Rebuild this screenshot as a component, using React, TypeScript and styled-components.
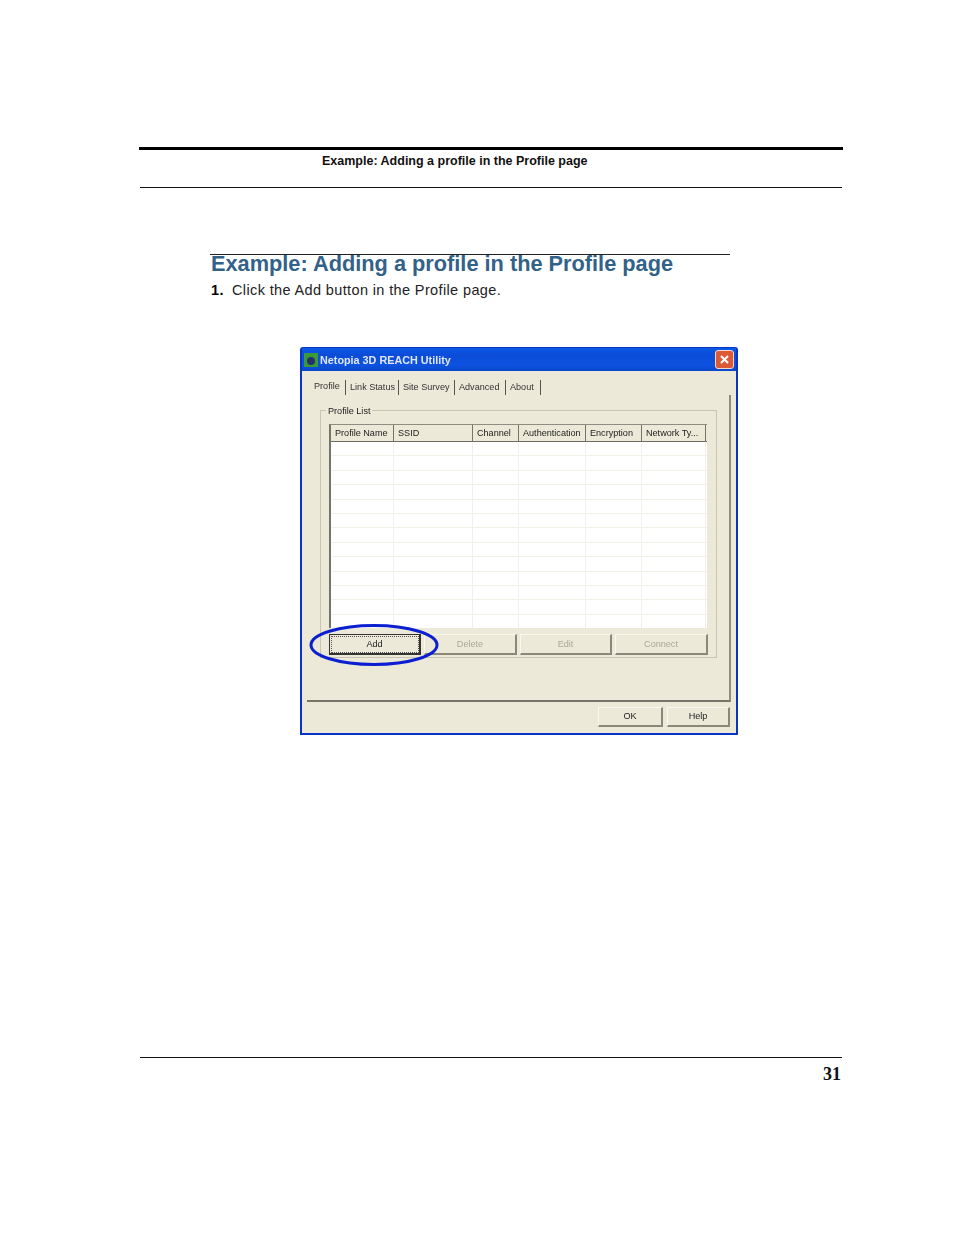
import styled, { createGlobalStyle } from "styled-components";

const GlobalStyle = createGlobalStyle`
  html, body { margin: 0; padding: 0; background: #fff; }
  body { font-family: "Liberation Sans", Arial, sans-serif; color: #111; }
`;

const Page = styled.div`
  width: 954px;
  height: 1235px;
  padding: 147px 111px 0 139px;
  box-sizing: border-box;
  display: flex;
  flex-direction: column;
`;

const TopRule = styled.div`
  height: 3px;
  background: #000;
`;

const RunningHead = styled.div`
  height: 38px;
  box-sizing: border-box;
  margin: 0 1px;
  padding: 4px 0 0 182px;
  font-size: 12.5px;
  line-height: 15px;
  font-weight: 700;
  border-bottom: 1px solid #111;
`;

const Content = styled.div`
  margin: 66px 0 0 71px;
  display: flex;
  flex-direction: column;
`;

const Heading = styled.h1`
  margin: 0;
  width: 520px;
  height: 26px;
  box-sizing: content-box;
  border-top: 1px solid #222;
  font-size: 21.75px;
  line-height: 18px;
  font-weight: 700;
  color: #336289;
  white-space: nowrap;
  text-indent: 1px;
`;

const Step = styled.p`
  margin: 0;
  padding-left: 1px;
  display: flex;
  font-size: 14.5px;
  line-height: 18px;
  color: #222;
  letter-spacing: 0.37px;
`;

const StepNumber = styled.span`
  width: 21px;
  font-weight: 700;
  color: #000;
`;

const Figure = styled.div`
  position: relative;
  margin: 48px 0 0 90px;
  width: 438px;
  filter: blur(0.45px);
`;

const Window = styled.div`
  height: 388px;
  box-sizing: border-box;
  display: flex;
  flex-direction: column;
  background: #ece9d8;
  border: 2px solid #0a35c0;
  border-top: 1px solid #0a35c0;
  border-radius: 3px 3px 0 0;
  font-size: 9.1px;
  color: #222;
`;

const TitleBar = styled.div`
  height: 23px;
  flex: none;
  display: flex;
  align-items: center;
  padding: 0 2px;
  background: linear-gradient(#0a5ae4, #0b4cd8 30%, #0d52e0 75%, #0a46c8);
`;

const TitleText = styled.span`
  margin: 1px 0 0 2px;
  flex: 1;
  font-size: 10.8px;
  font-weight: 700;
  color: #dfe7f6;
`;

const CloseButton = styled.div`
  width: 17px;
  height: 17px;
  border: 1px solid #f0d8d0;
  border-radius: 3px;
  background: #dd5a38;
  display: flex;
  align-items: center;
  justify-content: center;
`;

const Tabs = styled.div`
  height: 23px;
  flex: none;
  display: flex;
  align-items: flex-end;
  padding-left: 12px;
  margin-top: 1px;
`;

const Tab = styled.div<{ $active?: boolean; $width: number }>`
  width: ${(p) => p.$width}px;
  box-sizing: border-box;
  padding-left: ${(p) => (p.$active ? 0 : 4)}px;
  height: 15px;
  line-height: ${(p) => (p.$active ? 13 : 15)}px;
  border-right: 1px solid #555;
  white-space: nowrap;
  color: #333;
`;

const Panel = styled.div`
  height: 307px;
  flex: none;
  box-sizing: border-box;
  margin: 0 5px;
  border-right: 2px solid #8f8d80;
  border-bottom: 2px solid #77756a;
  padding: 15px 12px 0 13px;
`;

const GroupBox = styled.div`
  position: relative;
  height: 248px;
  box-sizing: border-box;
  border: 1px solid #c8c5b4;
  padding: 13px 9px 0 8px;
`;

const GroupTitle = styled.span`
  position: absolute;
  left: 5px;
  top: -6px;
  padding: 0 2px;
  background: #ece9d8;
  line-height: 12px;
`;

const List = styled.div`
  height: 204px;
  box-sizing: border-box;
  background: #fff;
  border-left: 2px solid #77756a;
  border-top: 1px solid #8f8d80;
  display: flex;
  flex-direction: column;
  overflow: hidden;
`;

const cols = "63px 79px 46px 67px 56px 64px";

const ListHeader = styled.div`
  flex: none;
  display: grid;
  grid-template-columns: ${cols};
  height: 16px;
  background: #ece9d8;
  border-bottom: 1px solid #6f6d62;
`;

const HeaderCell = styled.div`
  padding-left: 4px;
  line-height: 17px;
  border-right: 1px solid #77756a;
  white-space: nowrap;
  overflow: hidden;
`;

const Row = styled.div`
  flex: none;
  display: grid;
  grid-template-columns: ${cols};
  height: 14.4px;
  box-sizing: border-box;
  border-bottom: 1px solid #f1efe6;
`;

const Cell = styled.div`
  border-right: 1px solid #f1efe6;
`;

const ButtonRow = styled.div`
  display: grid;
  grid-template-columns: 92px 93px 92px 93px;
  column-gap: 3px;
  margin-top: 6px;
`;

const Button = styled.div<{ $disabled?: boolean; $focused?: boolean }>`
  height: 21px;
  box-sizing: border-box;
  display: flex;
  align-items: center;
  justify-content: center;
  color: ${(p) => (p.$disabled ? "#aaa89a" : "#222")};
  border-right: 2px solid ${(p) => (p.$focused ? "#333" : "#8a887b")};
  border-bottom: 2px solid ${(p) => (p.$focused ? "#333" : "#8a887b")};
  border-top: 1px solid ${(p) => (p.$focused ? "#333" : "#f8f7f0")};
  border-left: 1px solid ${(p) => (p.$focused ? "#333" : "#f8f7f0")};
  outline: ${(p) => (p.$focused ? "1px dotted #555" : "none")};
  outline-offset: -3px;
`;

const Footer = styled.div`
  flex: 1;
  display: flex;
  justify-content: flex-end;
  gap: 4px;
  padding: 5px 6px 0 0;
`;

const FooterButton = styled(Button)<{ $width: number }>`
  width: ${(p) => p.$width}px;
  height: 20px;
  padding-bottom: 1px;
`;

const Oval = styled.svg`
  position: absolute;
  left: 9px;
  top: 276px;
`;

const BottomRule = styled.div`
  margin: auto 1px 0;
  border-top: 1px solid #111;
  padding: 6px 1px 0 0;
  text-align: right;
  font-family: "Liberation Serif", "Times New Roman", serif;
  font-size: 18px;
  line-height: 21px;
  font-weight: 700;
  height: 171px;
`;

const headers = ["Profile Name", "SSID", "Channel", "Authentication", "Encryption", "Network Ty..."];

const tabs = [
  { label: "Link Status", width: 53 },
  { label: "Site Survey", width: 56 },
  { label: "Advanced", width: 51 },
  { label: "About", width: 35 },
];

export default function App() {
  return (
    <>
      <GlobalStyle />
      <Page>
        <TopRule />
        <RunningHead>Example: Adding a profile in the Profile page</RunningHead>
        <Content>
          <Heading>Example: Adding a profile in the Profile page</Heading>
          <Step>
            <StepNumber>1.</StepNumber>
            Click the Add button in the Profile page.
          </Step>
          <Figure>
            <Window>
              <TitleBar>
                <svg width="14" height="14" viewBox="0 0 14 14">
                  <rect width="14" height="14" fill="#3a9a3a" />
                  <circle cx="7" cy="8" r="4" fill="#23306a" />
                </svg>
                <TitleText>Netopia 3D REACH Utility</TitleText>
                <CloseButton>
                  <svg width="11" height="11" viewBox="0 0 11 11">
                    <path d="M2 2 L9 9 M9 2 L2 9" stroke="#fff" strokeWidth="2" />
                  </svg>
                </CloseButton>
              </TitleBar>
              <Tabs>
                <Tab $active $width={32}>Profile</Tab>
                {tabs.map((t) => (
                  <Tab key={t.label} $width={t.width}>{t.label}</Tab>
                ))}
              </Tabs>
              <Panel>
                <GroupBox>
                  <GroupTitle>Profile List</GroupTitle>
                  <List>
                    <ListHeader>
                      {headers.map((h) => (
                        <HeaderCell key={h}>{h}</HeaderCell>
                      ))}
                    </ListHeader>
                    {Array.from({ length: 13 }, (_, r) => (
                      <Row key={r}>
                        {headers.map((h) => (
                          <Cell key={h} />
                        ))}
                      </Row>
                    ))}
                  </List>
                  <ButtonRow>
                    <Button $focused>Add</Button>
                    <Button $disabled>Delete</Button>
                    <Button $disabled>Edit</Button>
                    <Button $disabled>Connect</Button>
                  </ButtonRow>
                </GroupBox>
              </Panel>
              <Footer>
                <FooterButton $width={65}>OK</FooterButton>
                <FooterButton $width={63}>Help</FooterButton>
              </Footer>
            </Window>
            <Oval width="130" height="44" viewBox="0 0 130 44">
              <ellipse cx="65" cy="22" rx="63" ry="19.5" fill="none" stroke="#0c1fd0" strokeWidth="3" />
            </Oval>
          </Figure>
        </Content>
        <BottomRule>31</BottomRule>
      </Page>
    </>
  );
}
